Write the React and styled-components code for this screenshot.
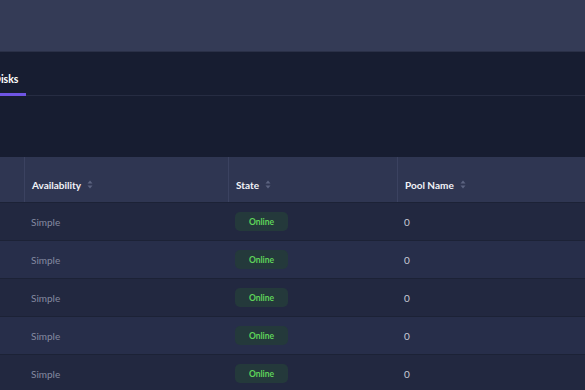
import React from "react";
import styled, { createGlobalStyle } from "styled-components";

const Global = createGlobalStyle`
  html, body { margin: 0; padding: 0; background: #171d31; }
  body { font-family: Lato, "Open Sans", sans-serif; overflow: hidden; }
`;

const Page = styled.div`
  width: 585px;
  height: 390px;
  overflow: hidden;
  background: #171d31;
  display: flex;
  flex-direction: column;
`;

const TopBar = styled.div`
  height: 51px;
  flex: none;
  background: #343b56;
  border-bottom: 1px solid #2a3047;
`;

const Shifted = styled.div`
  margin-left: -15px;
  display: flex;
  flex-direction: column;
`;

const Tabs = styled.div`
  display: flex;
  height: 43px;
  align-items: flex-end;
  border-bottom: 1px solid #262c42;
`;

const Tab = styled.div`
  padding: 0 8px 8px 8px;
  font-size: 10.5px;
  font-weight: 700;
  color: #ffffff;
  border-bottom: 3px solid ${(p) => (p.$active ? "#6f55e4" : "transparent")};
  margin-bottom: -1px;
  line-height: 12px;
`;

const Spacer = styled.div`
  height: 61px;
`;

const Table = styled.div`
  display: grid;
  grid-template-columns: 39px 204px 169px 1fr;
`;

const HeadCell = styled.div`
  height: 45px;
  background: #2f3652;
  border-left: ${(p) => (p.$first ? "none" : "1px solid #3b4260")};
  display: flex;
  align-items: center;
  gap: 6px;
  padding: 10px 7px 0;
  box-sizing: border-box;
  font-size: 10px;
  font-weight: 700;
  color: #f2f3f8;
`;

const SortIcon = () => (
  <svg width="6" height="9" viewBox="0 0 6 9">
    <path d="M3 0.5 L5.5 3.5 H0.5 Z" fill="#5c6380" />
    <path d="M3 8.5 L5.5 5.5 H0.5 Z" fill="#5c6380" />
  </svg>
);

const Cell = styled.div`
  height: 38px;
  background: ${(p) => (p.$odd ? "#272e4a" : "#222840")};
  border-top: 1px solid #1c2236;
  box-sizing: border-box;
  display: flex;
  align-items: center;
  padding: 0 7px;
  font-size: 10px;
  color: ${(p) => (p.$dim ? "#858aa1" : "#c9cbd6")};
`;

const Pill = styled.span`
  display: inline-flex;
  align-items: center;
  justify-content: center;
  width: 53px;
  height: 19px;
  border-radius: 5px;
  background: #24393b;
  color: #5fd45a;
  font-size: 8.5px;
  font-weight: 700;
`;

const rows = [0, 1, 2, 3, 4];

export default function App() {
  return (
    <>
      <Global />
      <Page>
        <TopBar />
        <Shifted>
          <Tabs>
            <Tab $active>Disks</Tab>
          </Tabs>
          <Spacer />
          <Table>
            <HeadCell $first />
            <HeadCell>
              Availability <SortIcon />
            </HeadCell>
            <HeadCell>
              State <SortIcon />
            </HeadCell>
            <HeadCell>
              Pool Name <SortIcon />
            </HeadCell>
            {rows.map((i) => (
              <React.Fragment key={i}>
                <Cell $odd={i % 2 === 1} />
                <Cell $odd={i % 2 === 1} $dim>
                  Simple
                </Cell>
                <Cell $odd={i % 2 === 1}>
                  <Pill>Online</Pill>
                </Cell>
                <Cell $odd={i % 2 === 1}>0</Cell>
              </React.Fragment>
            ))}
          </Table>
        </Shifted>
      </Page>
    </>
  );
}
